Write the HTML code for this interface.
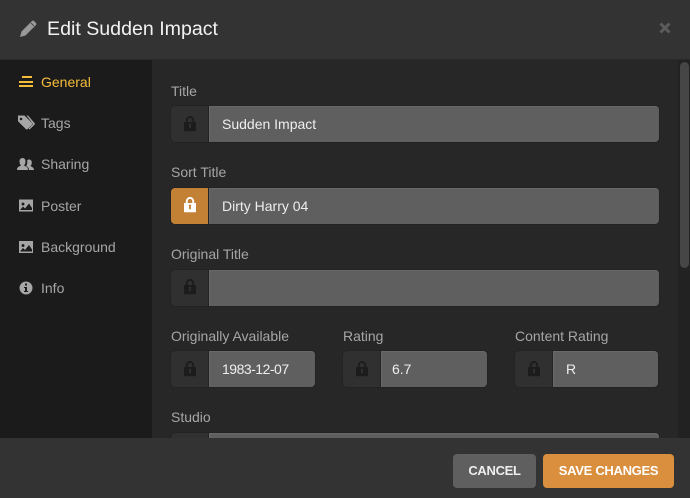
<!DOCTYPE html>
<html><head><meta charset="utf-8"><style>
html,body{margin:0;padding:0}
body{width:690px;height:498px;overflow:hidden;background:#242424;position:relative;font-family:"Liberation Sans",sans-serif}
div,span{position:absolute;box-sizing:border-box}
.t{white-space:nowrap;line-height:20px}
.nav{left:41px;font-size:14px;color:#a6a6a6}
.lab{font-size:14px;color:#a6a6a6}
.val{font-size:14px;color:#eee}
.lk{background:#303030;border-radius:4px 0 0 4px;width:38px;height:36px;box-shadow:0 0 0 1px #232323}
.in{background:#5f5f5f;border-radius:0 4px 4px 0;height:36px;border-left:1px solid #6a6a6a;box-shadow:0 1px 0 #686868 inset,0 0 0 1px #232323}
svg{position:absolute}
</style></head><body>
<div style="left:0;top:60px;width:152px;height:378px;background:#1b1b1b"></div>
<div style="left:152px;top:60px;width:538px;height:378px;background:#272727"></div>
<div style="left:678px;top:60px;width:12px;height:378px;background:#222"></div>
<div style="left:680px;top:62px;width:9px;height:206px;background:#464646;border-radius:5px"></div>

<div class="lab t" style="left:171px;top:81px">Title</div>
<div class="lk" style="left:171px;top:106px"></div><div class="in" style="left:209px;top:106px;width:450px"></div>
<div class="val t" style="left:222px;top:114px">Sudden Impact</div>
<div class="lab t" style="left:171px;top:162px">Sort Title</div>
<div class="lk" style="left:171px;top:188px;background:#c38136"></div><div class="in" style="left:209px;top:188px;width:450px"></div>
<div class="val t" style="left:222px;top:196px">Dirty Harry 04</div>
<div class="lab t" style="left:171px;top:244px">Original Title</div>
<div class="lk" style="left:171px;top:270px"></div><div class="in" style="left:209px;top:270px;width:450px"></div>
<div class="lab t" style="left:171px;top:326px">Originally Available</div>
<div class="lk" style="left:171px;top:351px"></div><div class="in" style="left:209px;top:351px;width:106px"></div>
<div class="val t" style="left:222px;top:359px;letter-spacing:-.5px">1983-12-07</div>
<div class="lab t" style="left:343px;top:326px">Rating</div>
<div class="lk" style="left:343px;top:351px"></div><div class="in" style="left:381px;top:351px;width:106px"></div>
<div class="val t" style="left:392px;top:359px">6.7</div>
<div class="lab t" style="left:515px;top:326px">Content Rating</div>
<div class="lk" style="left:515px;top:351px"></div><div class="in" style="left:553px;top:351px;width:105px"></div>
<div class="val t" style="left:566px;top:359px">R</div>
<div class="lab t" style="left:171px;top:407px">Studio</div>
<div class="lk" style="left:171px;top:433px"></div><div class="in" style="left:209px;top:433px;width:450px"></div>

<svg width="690" height="498" style="left:0;top:0">
<defs><path id="l" d="M-6 -2h1.800v-1.800a4.200 4.200 0 0 1 8.400 0v1.800h1.800v8.500a.8 .8 0 0 1-.8 .8h-10.400a.8 .8 0 0 1-.8-.8zM-2.300 -2h4.600v-1.800a2.300 2.300 0 0 0-4.600 0zM-.9 1.500v2.800h1.800v-2.800a1.200 1.200 0 1 0-1.800 0z" fill-rule="evenodd"/></defs>
<g fill="#1c1c1c"><use href="#l" x="190" y="124"/><use href="#l" x="190" y="287"/><use href="#l" x="190" y="369"/><use href="#l" x="362" y="369"/><use href="#l" x="534" y="369"/></g>
<use href="#l" x="190" y="205" fill="#fff"/>
</svg>

<div style="left:0;top:0;width:690px;height:60px;background:#333"></div>
<div style="left:0;top:438px;width:690px;height:60px;background:#333"></div>
<div style="left:0;top:59px;width:690px;height:1px;background:#2a2a2a"></div>

<svg width="690" height="498" style="left:0;top:0">
<path d="M20 37l1.500-5.500 10.500-10.500a1.500 1.500 0 0 1 2-.0l2 2a1.500 1.500 0 0 1 0 2l-10.500 10.500z" fill="#999"/>
<path d="M31 23l3 3" stroke="#333" stroke-width=".8" fill="none"/>
<path d="M660.500 23.500l9 9M669.500 23.500l-9 9" stroke="#5c5c5c" stroke-width="3" fill="none"/>
<g fill="#f6bd3a"><rect x="22" y="76" width="10" height="2"/><rect x="19" y="81" width="14" height="2"/><rect x="19" y="85" width="14" height="2"/></g>
<g fill="#a6a6a6">
<path d="M18 115.500h6.500l7.500 7.500a1.200 1.200 0 0 1 0 1.600l-4.500 4.500a1.200 1.200 0 0 1-1.600 0l-7.900-7.900zM21 117.700a1.300 1.300 0 1 0 .01 0z" fill-rule="evenodd"/>
<path d="M26.500 115.500h1.500l6.500 7.500a1.500 1.500 0 0 1 0 1.800l-5 4.700-1-.8 4.500-4.700z"/>
<path d="M17 170c0-3 2-3.500 4-4.500-1-1-1.500-2.500-1.500-4 0-2 1-3.500 3-3.500s3 1.500 3 3.500c0 1.500-.5 3-1.500 4 2 1 4 1.500 4 4.500z"/>
<path d="M29 170h5c0-2.500-2-3-3.500-4 1-1 1.300-2.300 1.300-3.500 0-1.800-1-3-2.800-3-.7 0-1.300.2-1.800.6.400 2.300-.1 4.500-1 6 1.800 1 2.800 2 2.800 3.900z"/>
<path d="M19 199.500h14v12h-14zM20 201v9h12v-2l-3-4.500-4 5-2-2-3 3.500zM23 202.500a1.500 1.500 0 1 0 .01 0z" fill-rule="evenodd"/>
<path d="M19 241h14v12h-14zM20 242.500v9h12v-2l-3-4.500-4 5-2-2-3 3.500zM23 244a1.500 1.500 0 1 0 .01 0z" fill-rule="evenodd"/>
<path d="M26 281.500a6.500 6.500 0 1 0 .01 0zM25 283.500h2v2h-2zM24 287h3v4h1v1h-4v-1h1v-3h-1z" fill-rule="evenodd"/>
</g>
</svg>

<div class="t" style="left:47px;top:19px;font-size:19.6px;line-height:20px;color:#f2f2f2">Edit Sudden Impact</div>
<div class="nav t" style="top:72px;color:#f6bd3a">General</div>
<div class="nav t" style="top:113px">Tags</div>
<div class="nav t" style="top:154px">Sharing</div>
<div class="nav t" style="top:196px">Poster</div>
<div class="nav t" style="top:237px">Background</div>
<div class="nav t" style="top:278px">Info</div>

<div style="left:453px;top:454px;width:83px;height:34px;background:#5f5f5f;border-radius:4px"></div>
<div class="t" style="left:453px;top:461px;width:83px;text-align:center;font-size:13px;letter-spacing:-.3px;font-weight:bold;color:#eee">CANCEL</div>
<div style="left:543px;top:454px;width:131px;height:34px;background:#d98f3e;border-radius:4px"></div>
<div class="t" style="left:543px;top:461px;width:131px;text-align:center;font-size:13px;letter-spacing:-.3px;font-weight:bold;color:#fff">SAVE CHANGES</div>
</body></html>
